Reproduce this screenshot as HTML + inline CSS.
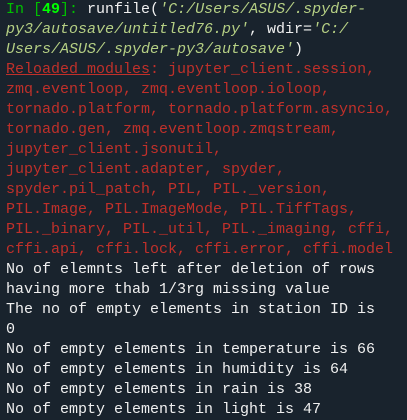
<!DOCTYPE html>
<html><head><style>
html,body{margin:0;padding:0;background:#19232d;width:407px;height:420px;overflow:hidden}
pre{margin:0;padding:0 0 0 6px;font-family:"Liberation Mono","DejaVu Sans Mono",monospace;font-size:15px;line-height:20px;color:#f0f0f0;white-space:pre}
.g{color:#00c000}.gb{color:#00ff00;font-weight:bold}
.s{color:#b5cf84;font-style:italic}
.r{color:#c0302a}
.u{text-decoration:underline}
</style></head><body><pre><span class="g">In [</span><span class="gb">49</span><span class="g">]:</span> runfile(<span class="s">'C:/Users/ASUS/.spyder-</span>
<span class="s">py3/autosave/untitled76.py'</span>, wdir=<span class="s">'C:/</span>
<span class="s">Users/ASUS/.spyder-py3/autosave'</span>)
<span class="r"><span class="u">Reloaded modules</span>: jupyter_client.session,
zmq.eventloop, zmq.eventloop.ioloop,
tornado.platform, tornado.platform.asyncio,
tornado.gen, zmq.eventloop.zmqstream,
jupyter_client.jsonutil,
jupyter_client.adapter, spyder,
spyder.pil_patch, PIL, PIL._version,
PIL.Image, PIL.ImageMode, PIL.TiffTags,
PIL._binary, PIL._util, PIL._imaging, cffi,
cffi.api, cffi.lock, cffi.error, cffi.model</span>
No of elemnts left after deletion of rows
having more thab 1/3rg missing value
The no of empty elements in station ID is
0
No of empty elements in temperature is 66
No of empty elements in humidity is 64
No of empty elements in rain is 38
No of empty elements in light is 47</pre></body></html>
